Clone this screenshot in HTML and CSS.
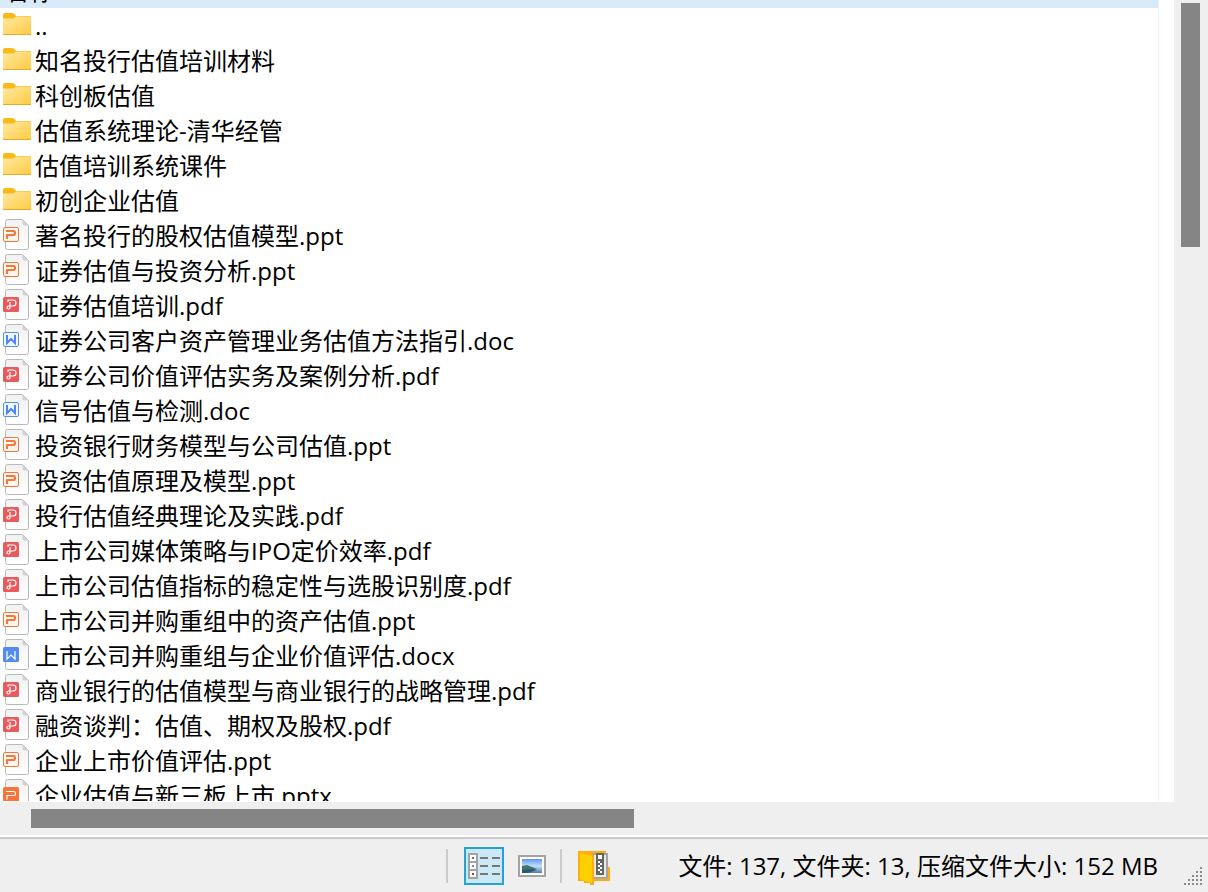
FILE: index.html
```
<!DOCTYPE html>
<html lang="zh-CN">
<head>
<meta charset="utf-8">
<title>压缩文件</title>
<link rel="stylesheet" href="styles.css">
</head>
<body>
<svg class="defs" width="0" height="0" aria-hidden="true">
  <defs>
    <linearGradient id="gf" x1="0" y1="0" x2="1" y2="1"><stop offset="0" stop-color="#ffe9a6"/><stop offset="1" stop-color="#ffcb3f"/></linearGradient>
    <linearGradient id="gp" x1="0" y1="0" x2="0" y2="1"><stop offset="0" stop-color="#f1f1f1"/><stop offset="1" stop-color="#ffffff"/></linearGradient>
    <linearGradient id="sky" x1="0" y1="0" x2="0" y2="1"><stop offset="0" stop-color="#5b97f5"/><stop offset=".5" stop-color="#c3dffa"/><stop offset="1" stop-color="#4d7fae"/></linearGradient>
    <symbol id="folder" viewBox="0 0 28 31">
      <path d="M0 6q0-2 2-2h7q2 0 3 1.500l1 1.500h14q1 0 1 1v6H0z" fill="#fbb917"/>
      <path d="M0 9.500h9.500q1.500 0 2.500-1l1-1h14q1 0 1 1V25q0 1-1 1H1q-1 0-1-1z" fill="url(#gf)"/>
      <path d="M0 25.500h28" stroke="#e5aa27"/>
    </symbol>
    <symbol id="page" viewBox="0 0 28 31">
      <path d="M4.500.5h15l6 6v22q0 2-2 2h-19q-2 0-2-2v-26q0-2 2-2z" fill="url(#gp)" stroke="#b9b9b9"/>
      <path d="M19.500.5v4q0 2 2 2h4z" fill="#d2d2d2"/>
    </symbol>
    <symbol id="ppt" viewBox="0 0 28 31">
      <use href="#page"/>
      <rect x=".5" y="8.500" width="15" height="14" rx="1.500" fill="#fff5ef" stroke="#f4783e"/>
      <path d="M3 12h7.500q1.500 0 1.500 2t-1.500 2H4v4" fill="none" stroke="#f4783e" stroke-width="2.200" stroke-linejoin="round"/>
    </symbol>
    <symbol id="pptx" viewBox="0 0 28 31">
      <use href="#page"/>
      <rect y="8" width="16" height="15" rx="1.500" fill="#f4743c"/>
      <path d="M3 12.500h8q1.500 0 1.500 2t-1.500 2H4v4" fill="none" stroke="#fff" stroke-width="1.200"/>
    </symbol>
    <symbol id="doc" viewBox="0 0 28 31">
      <use href="#page"/>
      <rect x=".5" y="8.500" width="15" height="14" rx="1.500" fill="#f1f7ff" stroke="#5590f5"/>
      <path d="M4 11v8l4-4 4 4v-8" fill="none" stroke="#4a87f3" stroke-width="2"/>
    </symbol>
    <symbol id="docx" viewBox="0 0 28 31">
      <use href="#page"/>
      <rect y="8" width="16" height="15" rx="1.500" fill="#528cf0"/>
      <path d="M4 12v8l4-4 4 4v-8" fill="none" stroke="#fff" stroke-width="1.200"/>
    </symbol>
    <symbol id="pdf" viewBox="0 0 28 31">
      <use href="#page"/>
      <rect y="8" width="16" height="15" rx="1.500" fill="#ea5a5c"/>
      <path d="M5 13v-2h5q3 0 3 3t-3 3H5.500q-1.500 0-1.500 1.500T5.500 20 7 18.500V13" fill="none" stroke="#fff" stroke-width="1.200"/>
    </symbol>
  </defs>
</svg>
<main class="viewer">
  <section class="list">
    <div class="column">
      <div class="header"><span class="header-label">名称</span></div>
      <ul class="files">
        <li class="file"><svg class="icon"><use href="#folder"/></svg>..</li>
        <li class="file"><svg class="icon"><use href="#folder"/></svg>知名投行估值培训材料</li>
        <li class="file"><svg class="icon"><use href="#folder"/></svg>科创板估值</li>
        <li class="file"><svg class="icon"><use href="#folder"/></svg>估值系统理论-清华经管</li>
        <li class="file"><svg class="icon"><use href="#folder"/></svg>估值培训系统课件</li>
        <li class="file"><svg class="icon"><use href="#folder"/></svg>初创企业估值</li>
        <li class="file"><svg class="icon"><use href="#ppt"/></svg>著名投行的股权估值模型.ppt</li>
        <li class="file"><svg class="icon"><use href="#ppt"/></svg>证券估值与投资分析.ppt</li>
        <li class="file"><svg class="icon"><use href="#pdf"/></svg>证券估值培训.pdf</li>
        <li class="file"><svg class="icon"><use href="#doc"/></svg>证券公司客户资产管理业务估值方法指引.doc</li>
        <li class="file"><svg class="icon"><use href="#pdf"/></svg>证券公司价值评估实务及案例分析.pdf</li>
        <li class="file"><svg class="icon"><use href="#doc"/></svg>信号估值与检测.doc</li>
        <li class="file"><svg class="icon"><use href="#ppt"/></svg>投资银行财务模型与公司估值.ppt</li>
        <li class="file"><svg class="icon"><use href="#ppt"/></svg>投资估值原理及模型.ppt</li>
        <li class="file"><svg class="icon"><use href="#pdf"/></svg>投行估值经典理论及实践.pdf</li>
        <li class="file"><svg class="icon"><use href="#pdf"/></svg>上市公司媒体策略与IPO定价效率.pdf</li>
        <li class="file"><svg class="icon"><use href="#pdf"/></svg>上市公司估值指标的稳定性与选股识别度.pdf</li>
        <li class="file"><svg class="icon"><use href="#ppt"/></svg>上市公司并购重组中的资产估值.ppt</li>
        <li class="file"><svg class="icon"><use href="#docx"/></svg>上市公司并购重组与企业价值评估.docx</li>
        <li class="file"><svg class="icon"><use href="#pdf"/></svg>商业银行的估值模型与商业银行的战略管理.pdf</li>
        <li class="file"><svg class="icon"><use href="#pdf"/></svg>融资谈判：估值、期权及股权.pdf</li>
        <li class="file"><svg class="icon"><use href="#ppt"/></svg>企业上市价值评估.ppt</li>
        <li class="file"><svg class="icon"><use href="#pptx"/></svg>企业估值与新三板上市.pptx</li>
      </ul>
    </div>
  </section>
  <div class="vbar"><div class="vthumb"></div></div>
  <div class="hbar"><div class="hthumb"></div></div>
</main>
<footer class="status">
  <div class="tools">
    <button class="tool active" type="button" aria-label="详细信息">
      <svg width="32" height="26" viewBox="0 0 32 26" shape-rendering="crispEdges">
        <path fill="#a3a3a3" d="M0 0h10v26H0z"/>
        <path fill="#fff" d="M2 2h6v6H2zM2 10h6v6H2zM2 18h6v6H2z"/>
        <path fill="#548069" d="M4 4h2v2H4z"/><path fill="#648ff0" d="M4 12h2v2H4z"/><path fill="#cb2929" d="M4 20h2v2H4z"/>
        <path fill="#777" d="M12 4h8v2h-8zM24 4h8v2h-8zM12 12h8v2h-8zM24 12h8v2h-8zM12 20h8v2h-8zM24 20h8v2h-8z"/>
      </svg>
    </button>
    <button class="tool" type="button" aria-label="缩略图">
      <svg width="28" height="22" viewBox="0 0 28 22">
        <path fill="#a3a3a3" d="M0 0h28v22H0z"/><path fill="#fff" d="M2 2h24v18H2z"/>
        <path fill="url(#sky)" d="M4 4h20v14H4z"/>
        <path fill="#3f7765" d="M4 11l5-1 5 2 5 2-7 2-8 2z"/><path fill="#29577f" d="M4 15l9-1 6 1-9 3H4z"/>
      </svg>
    </button>
  </div>
  <div class="archive">
    <svg width="33" height="34" viewBox="0 0 33 34">
      <path fill="#ffad08" d="M0 0h28v4h-3v22h5V16h2v14H16v4h-4v-2H6v-2H0z"/>
      <path fill="#a5a5a5" d="M14 2h16v26H14z"/><path fill="#e9e9e9" d="M16 4h12v22H16z"/>
      <path fill="#656565" d="M18 2h8v22h-8z"/>
      <path fill="#fff" d="M20 4h4v4h-4zM20 10h2v2h-2zM22 12h2v2h-2zM20 14h2v2h-2zM22 16h2v2h-2zM20 18h2v2h-2zM22 20h2v2h-2z"/>
      <path fill="#ffd000" d="M2 2l12 3v27L2 28z"/><path fill="#ffad08" d="M0 0h2v30H0zM14 4h2v30h-2z"/>
    </svg>
  </div>
  <div class="summary">文件: 137, 文件夹: 13, 压缩文件大小: 152 MB</div>
  <svg class="grip" width="18" height="18" viewBox="0 0 18 18" shape-rendering="crispEdges">
    <path fill="#8a8a8a" d="M16 0h2v2h-2zM16 4h2v2h-2zM12 4h2v2h-2zM16 8h2v2h-2zM12 8h2v2h-2zM8 8h2v2H8zM16 12h2v2h-2zM12 12h2v2h-2zM8 12h2v2H8zM4 12h2v2H4zM16 16h2v2h-2zM12 16h2v2h-2zM8 16h2v2H8zM4 16h2v2H4zM0 16h2v2H0z"/>
  </svg>
</footer>
</body>
</html>
```
FILE: styles.css
```
* { box-sizing: border-box; }
body {
  margin: 0;
  height: 100vh;
  display: flex;
  flex-direction: column;
  overflow: hidden;
  background: #efefef;
  color: #000;
  font: 24px/35px "Open Sans", "Noto Sans CJK SC", sans-serif;
}
.defs { position: absolute; }
.viewer {
  flex: 1;
  min-height: 0;
  display: grid;
  grid-template-columns: minmax(0, 1fr) 34px;
  grid-template-rows: minmax(0, 1fr) 33px;
}
.list {
  overflow: hidden;
  padding: 0 15px 1px 0;
  background: #fff;
  border-bottom-right-radius: 2px;
}
.column {
  height: 100%;
  overflow: hidden;
  border-right: 1px solid #e6f1fd;
}
.header {
  height: 8px;
  margin-right: -1px;
  display: flex;
  align-items: flex-end;
  overflow: hidden;
  padding-left: 5px;
  background: #d9eaf8;
}
.files {
  margin: 0;
  padding: 1px 0 0 3px;
  list-style: none;
}
.file {
  display: flex;
  gap: 4px;
  height: 35px;
  line-height: 33px;
  white-space: nowrap;
}
.icon {
  flex: none;
  width: 28px;
  height: 31px;
}
.vbar { padding: 3px 8px 0 7px; }
.vthumb { height: 244px; background: #858585; }
.hbar { padding: 7px 0 0 28px; }
.hthumb {
  width: 53%;
  height: 19px;
  margin-left: 3px;
  max-width: 603px;
  background: #858585;
}
.status {
  height: 57px;
  flex: none;
  display: flex;
  align-items: center;
  justify-content: flex-end;
  border-top: 2px solid #fff;
  box-shadow: inset 0 2px #ccc;
  padding: 2px 6px 0 0;
}
.tools, .archive {
  display: flex;
  align-items: center;
  height: 34px;
  border-left: 2px solid #ccc;
}
.tools { padding: 0 8px 0 16px; gap: 8px; }
.tool {
  display: flex;
  align-items: center;
  justify-content: center;
  width: 40px;
  height: 38px;
  padding: 0;
  border: 2px solid transparent;
  background: none;
}
.active { border-color: #26a0da; background: #cbe8f6; }
.archive { padding: 4px 67px 0 16px; }
.archive svg { flex: none; }
.summary { white-space: nowrap; }
.grip {
  align-self: flex-end;
  flex: none;
  margin: 0 0 7px 26px;
}
```
